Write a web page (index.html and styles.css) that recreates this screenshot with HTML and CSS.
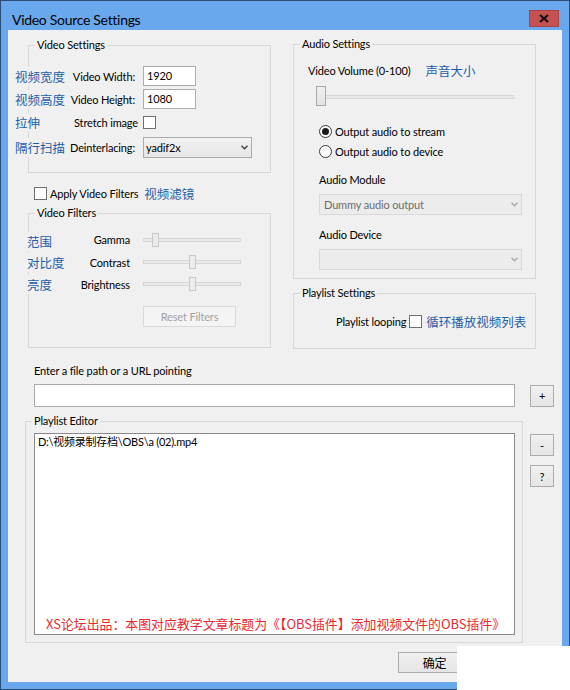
FILE: index.html
```html
<!DOCTYPE html>
<html lang="zh-CN">
<head>
<meta charset="utf-8">
<title>Video Source Settings</title>
<link rel="stylesheet" href="styles.css">
</head>
<body>
<div class="window">
  <div class="titlebar">
    <span class="title">Video Source Settings</span>
    <span class="close"><svg width="10" height="9" viewBox="0 0 10 9"><path d="M1 1 L9 8 M9 1 L1 8" stroke="#111" stroke-width="2.2" fill="none"/></svg></span>
  </div>
  <div class="client">
    <div class="top">
      <div class="col col-left">
        <div class="group g-video">
          <div class="legend">Video Settings</div>
          <div class="vrows">
            <div class="vrow h24"><div class="lbl"><span class="zh">视频宽度</span><span class="en">Video Width:</span></div><div class="tb">1920</div></div>
            <div class="vrow h22"><div class="lbl"><span class="zh">视频高度</span><span class="en">Video Height:</span></div><div class="tb">1080</div></div>
            <div class="vrow h24"><div class="lbl"><span class="zh">拉伸</span><span class="en en-stretch">Stretch image</span></div><div class="cb"></div></div>
            <div class="vrow h26"><div class="lbl"><span class="zh">隔行扫描</span><span class="en">Deinterlacing:</span></div><div class="combo"><span>yadif2x</span><svg class="arrow" width="7" height="5" viewBox="0 0 7 5"><path d="M0.5 0.8 L3.5 3.8 L6.5 0.8" stroke="#3a3a3a" stroke-width="1.3" fill="none"/></svg></div></div>
          </div>
        </div>
        <div class="apply"><div class="cb"></div><span class="apply-text">Apply Video Filters</span><span class="zh apply-zh">视频滤镜</span></div>
        <div class="group g-filters">
          <div class="legend">Video Filters</div>
          <div class="frows">
            <div class="frow h23"><div class="lbl"><span class="zh zh-low">范围</span><span class="en">Gamma</span></div><div class="slider"><div class="track"></div><div class="thumb" style="left:9px"></div></div></div>
            <div class="frow h22"><div class="lbl"><span class="zh">对比度</span><span class="en">Contrast</span></div><div class="slider"><div class="track"></div><div class="thumb" style="left:46px"></div></div></div>
            <div class="frow h22"><div class="lbl"><span class="zh">亮度</span><span class="en">Brightness</span></div><div class="slider"><div class="track"></div><div class="thumb" style="left:46px"></div></div></div>
          </div>
          <div class="btn btn-reset">Reset Filters</div>
        </div>
      </div>
      <div class="col col-right">
        <div class="group g-audio">
          <div class="legend">Audio Settings</div>
          <div class="vol-label"><span>Video Volume (0-100)</span><span class="zh vol-zh">声音大小</span></div>
          <div class="vol-slider"><div class="track"></div><div class="vthumb"></div></div>
          <div class="radio-row first"><span class="radio"><span class="dot"></span></span><span class="rtext">Output audio to stream</span></div>
          <div class="radio-row"><span class="radio"></span><span class="rtext">Output audio to device</span></div>
          <div class="a-label">Audio Module</div>
          <div class="combo-dis"><span>Dummy audio output</span><svg class="arrow" width="7" height="5" viewBox="0 0 7 5"><path d="M0.5 0.8 L3.5 3.8 L6.5 0.8" stroke="#a8a8a8" stroke-width="1.3" fill="none"/></svg></div>
          <div class="a-label second">Audio Device</div>
          <div class="combo-dis"><span></span><svg class="arrow" width="7" height="5" viewBox="0 0 7 5"><path d="M0.5 0.8 L3.5 3.8 L6.5 0.8" stroke="#a8a8a8" stroke-width="1.3" fill="none"/></svg></div>
        </div>
        <div class="group g-playlist">
          <div class="legend">Playlist Settings</div>
          <div class="loop-row"><span>Playlist looping</span><div class="cb loop-cb"></div><span class="zh loop-zh">循环播放视频列表</span></div>
        </div>
      </div>
    </div>
    <div class="path-label">Enter a file path or a URL pointing</div>
    <div class="path-row"><div class="path-tb"></div><div class="btn sq plus">+</div></div>
    <div class="editor-row">
      <div class="group g-editor">
        <div class="legend">Playlist Editor</div>
        <div class="listbox">
          <div class="entry">D:\视频录制存档\OBS\a (02).mp4</div>
          <div class="note">XS论坛出品：本图对应教学文章标题为《【OBS插件】添加视频文件的OBS插件》</div>
        </div>
      </div>
      <div class="side-btns">
        <div class="btn sq">-</div>
        <div class="btn sq">?</div>
      </div>
    </div>
    <div class="footer"><div class="btn ok">确定</div></div>
  </div>
  <div class="mask"></div>
</div>
</body>
</html>
```
FILE: styles.css
```css
* { box-sizing: border-box; }
html, body { margin: 0; padding: 0; }
body {
  width: 570px;
  height: 690px;
  overflow: hidden;
  background: #ffffff;
  font-family: Lato, "Noto Sans CJK SC", sans-serif;
  font-size: 11px;
  letter-spacing: -0.15px;
  color: #000;
  white-space: nowrap;
}
.window {
  position: relative;
  width: 570px;
  height: 690px;
  background: #6aa8ed;
  border: 1px solid #2b4e78;
  padding: 0 7px 7px 7px;
  display: flex;
  flex-direction: column;
}
.titlebar {
  height: 29px;
  flex: none;
  display: flex;
  justify-content: space-between;
  align-items: flex-start;
}
.title {
  font-size: 14px;
  letter-spacing: -0.3px;
  line-height: 18px;
  margin: 10px 0 0 4px;
  color: #000;
}
.close {
  width: 30px;
  height: 17px;
  margin: 9px 3px 0 0;
  background: #c75050;
  border: 1px solid #a94242;
  display: flex;
  align-items: center;
  justify-content: center;
}
.client {
  flex: 1;
  background: #f0f0f0;
  padding: 14px 0 0 0;
}
.top { display: flex; gap: 22px; margin-left: 20px; }
.col { width: 243px; }
.col-left { padding-top: 1px; }
.group { border: 1px solid #d7d7d7; }
.legend {
  width: max-content;
  margin: -8px 0 0 6px;
  padding: 0 2px;
  line-height: 14px;
  background: #f0f0f0;
}
.zh {
  font-family: "Noto Sans CJK SC", sans-serif;
  font-size: 12.5px;
  letter-spacing: 0;
  color: #1d5ea8;
  background: #f0f0f0;
}
.g-video { height: 128px; }
.vrows { margin: 12px 0 0 -14px; }
.vrow {
  display: grid;
  grid-template-columns: 120px auto;
  column-gap: 8px;
  align-items: center;
  justify-items: start;
}
.h22 { height: 22px; }
.h23 { height: 23px; }
.h24 { height: 24px; }
.h26 { height: 26px; }
.lbl { display: flex; justify-content: space-between; align-items: center; width: 100%; }
.en-stretch { margin-right: -3px; }
.tb {
  width: 53px;
  height: 20px;
  border: 1px solid #acadb3;
  background: #fff;
  padding-left: 3px;
  line-height: 18px;
}
.cb {
  width: 13px;
  height: 13px;
  border: 1px solid #707070;
  background: #fff;
  flex: none;
}
.combo {
  width: 109px;
  height: 21px;
  border: 1px solid #acacac;
  background: linear-gradient(#f2f2f2, #e6e6e6);
  display: flex;
  align-items: center;
  justify-content: space-between;
  padding: 0 3px 0 2px;
}
.arrow { display: block; }
.apply {
  margin: 10px 0 0 6px;
  height: 20px;
  display: flex;
  align-items: center;
}
.apply-text { margin-left: 3px; }
.apply-zh { margin-left: 6px; }
.g-filters { margin-top: 10px; height: 135px; }
.frows { margin: 8px 0 0 -2px; }
.frow {
  display: grid;
  grid-template-columns: 103px 98px;
  column-gap: 13px;
  align-items: center;
}
.zh-low { position: relative; top: 2px; }
.slider { position: relative; width: 98px; height: 14px; }
.track {
  position: absolute;
  left: 0;
  right: 0;
  top: 5px;
  height: 4px;
  background: #e7eaea;
  border: 1px solid #d6d6d6;
}
.thumb {
  position: absolute;
  top: 0;
  width: 7px;
  height: 14px;
  background: #ececec;
  border: 1px solid #c8c8c8;
}
.btn {
  border: 1px solid #acacac;
  background: linear-gradient(#f0f0f0, #e5e5e5);
  text-align: center;
  display: flex;
  align-items: center;
  justify-content: center;
}
.btn-reset {
  margin: 11px 0 0 114px;
  width: 93px;
  height: 21px;
  border-color: #d9d9d9;
  background: #f4f4f4;
  color: #a2a2a2;
}
.g-audio { height: 235px; }
.vol-label { margin: 11px 0 0 14px; line-height: 17px; display: flex; }
.vol-zh { margin-left: 15px; }
.vol-slider { margin: 7px 0 0 22px; width: 198px; height: 20px; position: relative; }
.vol-slider .track { top: 9px; }
.vthumb {
  position: absolute;
  left: 0;
  top: 0;
  width: 10px;
  height: 20px;
  background: linear-gradient(#f0f0f0, #e3e3e3);
  border: 1px solid #a9a9a9;
}
.radio-row { margin-left: 25px; height: 20px; display: flex; align-items: center; }
.radio-row.first { margin-top: 15px; }
.radio {
  width: 13px;
  height: 13px;
  border-radius: 50%;
  border: 1px solid #3a3a3a;
  background: #fff;
  display: flex;
  align-items: center;
  justify-content: center;
}
.dot { width: 7px; height: 7px; border-radius: 50%; background: #1c1c1c; }
.rtext { margin-left: 3px; }
.a-label { margin: 11px 0 0 25px; line-height: 16px; }
.a-label.second { margin-top: 12px; }
.combo-dis {
  margin: 6px 0 0 25px;
  width: 203px;
  height: 21px;
  border: 1px solid #d9d9d9;
  background: #ececec;
  color: #6d6d6d;
  display: flex;
  align-items: center;
  justify-content: space-between;
  padding: 0 3px 0 4px;
}
.g-playlist { margin-top: 14px; height: 56px; }
.loop-row { margin: 11px 0 0 42px; height: 21px; display: flex; align-items: center; }
.loop-cb { margin-left: 3px; }
.loop-zh { margin-left: 4px; }
.path-label { margin: 13px 0 0 26px; line-height: 17px; }
.path-row { margin-top: 5px; height: 23px; display: flex; align-items: center; }
.path-tb {
  margin-left: 26px;
  width: 481px;
  height: 23px;
  border: 1px solid #a9a9a9;
  background: #fff;
}
.sq { width: 24px; height: 22px; }
.plus { margin-left: 15px; }
.editor-row { margin-top: 14px; display: flex; align-items: flex-start; }
.g-editor { margin-left: 17px; width: 498px; height: 222px; }
.listbox {
  margin: 5px 0 0 8px;
  width: 481px;
  height: 202px;
  border: 1px solid #8a8a8a;
  background: #fff;
  display: flex;
  flex-direction: column;
  padding: 0 0 1px 3px;
}
.entry { line-height: 16px; font-size: 11px; letter-spacing: -0.25px; }
.note {
  margin-top: auto;
  padding-left: 8px;
  font-family: "Noto Sans CJK SC", sans-serif;
  font-size: 12.9px;
  letter-spacing: 0;
  line-height: 18px;
  color: #e8292e;
}
.side-btns { margin: 13px 0 0 7px; display: flex; flex-direction: column; gap: 9px; }
.footer { margin-top: 9px; }
.ok {
  margin-left: 390px;
  width: 73px;
  height: 21px;
  font-family: "Noto Sans CJK SC", sans-serif;
  font-size: 12px;
}
.mask {
  position: absolute;
  left: 456px;
  top: 645px;
  width: 113px;
  height: 44px;
  background: #fff;
}
```
